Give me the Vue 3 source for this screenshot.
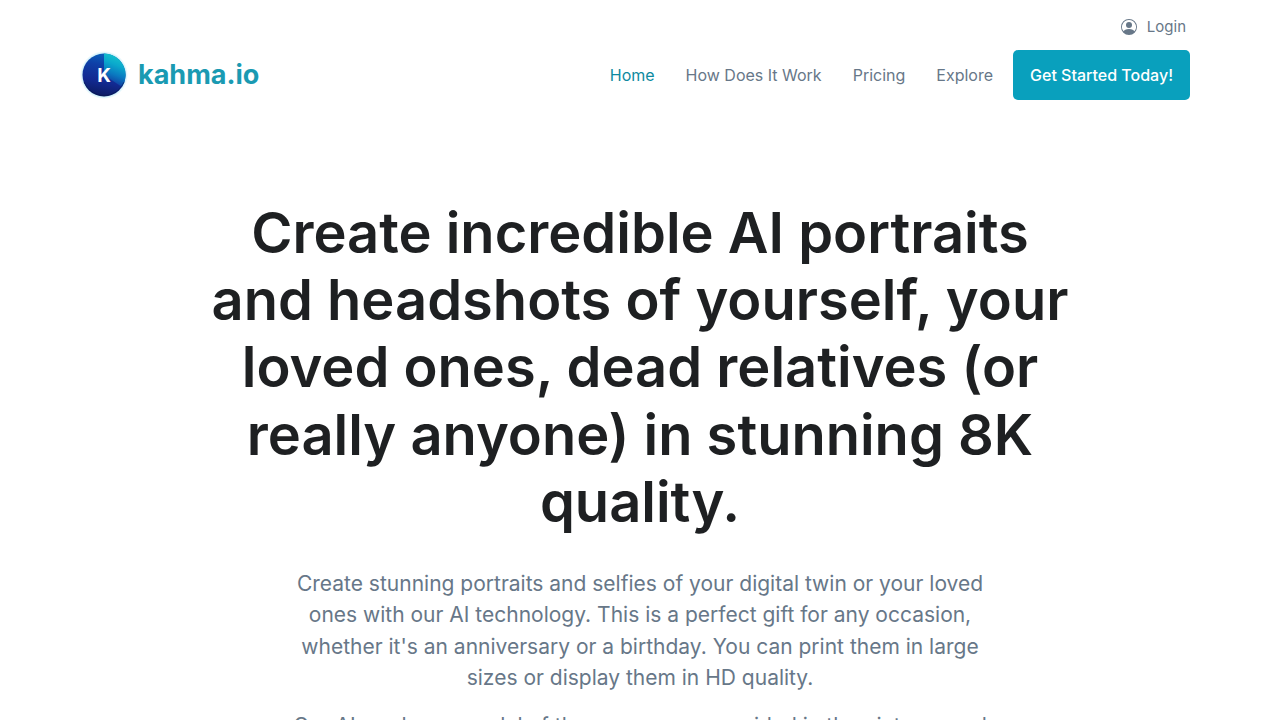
<script setup>
const links = [
  { label: 'Home', active: true },
  { label: 'How Does It Work' },
  { label: 'Pricing' },
  { label: 'Explore' },
]
</script>

<template>
  <div class="page">
    <header class="header">
      <div class="topbar">
        <a class="login" href="#">
          <svg viewBox="0 0 16 16" width="16" height="16" fill="currentColor" aria-hidden="true">
            <path d="M11 6a3 3 0 1 1-6 0 3 3 0 0 1 6 0z" />
            <path fill-rule="evenodd" d="M0 8a8 8 0 1 1 16 0A8 8 0 0 1 0 8zm8-7a7 7 0 0 0-5.468 11.37C3.242 11.226 4.805 10 8 10s4.757 1.225 5.468 2.37A7 7 0 0 0 8 1z" />
          </svg>
          <span>Login</span>
        </a>
      </div>
      <nav class="nav">
        <a class="brand" href="#">
          <svg class="mark" viewBox="0 0 48 48" width="48" height="48" aria-hidden="true">
            <defs>
              <linearGradient id="disc" x1="0.6" y1="0" x2="0.4" y2="1">
                <stop offset="0" stop-color="#0a62bc" />
                <stop offset="0.3" stop-color="#0e3ea6" />
                <stop offset="0.65" stop-color="#122a92" />
                <stop offset="1" stop-color="#0c1a60" />
              </linearGradient>
              <linearGradient id="wedge" gradientUnits="userSpaceOnUse" x1="30" y1="34" x2="40" y2="8">
                <stop offset="0" stop-color="#12309a" />
                <stop offset="0.4" stop-color="#0a78c0" />
                <stop offset="0.75" stop-color="#0aa8cc" />
                <stop offset="1" stop-color="#12bccc" />
              </linearGradient>
              <radialGradient id="glow">
                <stop offset="0.86" stop-color="#8fdcf2" stop-opacity="0.6" />
                <stop offset="1" stop-color="#8fdcf2" stop-opacity="0" />
              </radialGradient>
            </defs>
            <circle cx="24" cy="24" r="24" fill="url(#glow)" />
            <circle cx="24" cy="24" r="21.5" fill="url(#disc)" />
            <path d="M24 24V2.500A21.500 21.500 0 0 1 42 36Z" fill="url(#wedge)" />
            <path d="M4 31A21.500 21.500 0 0 0 44 31" fill="none" stroke="#081749" stroke-opacity="0.5" />
            <text class="initial" x="24" y="31" text-anchor="middle">K</text>
          </svg>
          <span>kahma.io</span>
        </a>
        <div class="links">
          <a v-for="link in links" :key="link.label" href="#" class="link" :class="{ active: link.active }">{{ link.label }}</a>
          <a class="cta" href="#">Get Started Today!</a>
        </div>
      </nav>
    </header>
    <main class="hero">
      <h1>Create incredible AI portraits and headshots of yourself, your loved ones, dead relatives (or really anyone) in stunning 8K quality.</h1>
      <div class="copy">
        <p>Create stunning portraits and selfies of your digital twin or your loved ones with our AI technology. This is a perfect gift for any occasion, whether it's an anniversary or a birthday. You can print them in large sizes or display them in HD quality.</p>
        <p>Our AI renders a model of the person you provided in the pictures and</p>
      </div>
    </main>
  </div>
</template>

<style>
body {
  margin: 0;
  background: #fff;
  overflow: hidden;
}
</style>

<style scoped>
.page {
  font-family: Inter, "Liberation Sans", sans-serif;
  font-size: 16px;
  line-height: 24px;
  color: #677788;
  height: 100vh;
  overflow: hidden;
}
a {
  color: inherit;
  text-decoration: none;
}
.header {
  max-width: 1100px;
  margin: 0 auto;
}
.topbar {
  display: flex;
  justify-content: flex-end;
  padding: 15px 4px 11px 0;
}
.login {
  display: flex;
  align-items: center;
  gap: 10px;
  font-size: 15px;
}
.nav {
  display: flex;
  align-items: center;
  justify-content: space-between;
}
.brand {
  display: flex;
  align-items: center;
  gap: 10px;
  margin-left: -10px;
  color: #1a9ab2;
  font-size: 27px;
  font-weight: 700;
}
.mark {
  display: block;
}
.initial {
  fill: #fff;
  font-size: 19px;
  font-weight: 700;
}
.links {
  display: flex;
  align-items: center;
}
.link {
  margin-right: 31px;
}
.link:nth-last-child(2) {
  margin-right: 20px;
}
.active {
  color: #0e8a9f;
}
.cta {
  padding: 13px 17px;
  border-radius: 5px;
  background: #09a0bd;
  color: #fff;
  font-weight: 500;
}
.hero {
  padding: 100px 20px 0;
  text-align: center;
}
h1 {
  max-width: 880px;
  margin: 0 auto 32px;
  color: #1e2022;
  font-size: 56px;
  font-weight: 600;
  line-height: 1.2;
}
.copy {
  max-width: 700px;
  margin: 0 auto;
  font-size: 21px;
  line-height: 1.5;
}
p {
  margin: 0 0 16px;
}
</style>
